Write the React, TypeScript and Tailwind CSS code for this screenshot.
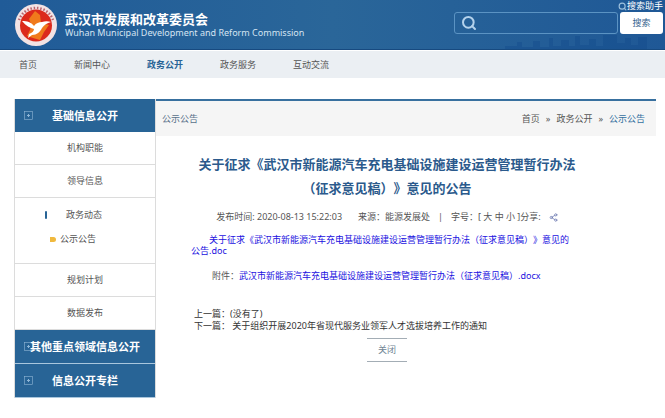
import React from 'react';
import { Search, Share2 } from 'lucide-react';

const navItems = ['首页', '新闻中心', '政务公开', '政务服务', '互动交流'];

const PlusBox: React.FC = () => (
    <svg viewBox="0 0 9 9" className="w-[9px] h-[9px] flex-shrink-0" fill="none" stroke="#8fb6d6">
        <rect x="0.5" y="0.5" width="8" height="8" strokeWidth="0.6" />
        <path d="M4.5 3v3M3 4.5h3" />
    </svg>
);

const Emblem: React.FC = () => (
    <svg viewBox="0 0 44 44" className="w-11 h-11 flex-shrink-0" aria-hidden="true">
        <circle cx="22" cy="22" r="21" fill="#f3e3e4" />
        <path d="M5 17a18 18 0 0 1 34 0" fill="none" stroke="#b9656f" strokeWidth="2.5" strokeDasharray="1.5 1.8" />
        <circle cx="22" cy="22.5" r="16" fill="#dc2a1c" />
        <path d="M21 8l5 4 1 8 8 2-5 7-4 8-7-2-6-2 3-6 1-6-2-5z" fill="#f07a1c" />
        <path d="M8 18c5 0 9 1 12 5 2-3 5-4 8-4 3-1 6-1 9 0-4 1-7 3-9 6-2 4-5 7-10 7l-4 3 1-4c3-1 5-3 5-5-4-1-8-3-12-8z" fill="#fff" />
    </svg>
);

const SideHeading: React.FC<{ title: string; tight?: boolean }> = ({ title, tight }) => (
    <a
        href="#"
        className={`flex items-center h-[33px] bg-[#286496] text-white text-[11px] font-bold whitespace-nowrap pl-[9px] ${tight ? '' : 'gap-[19px]'}`}
    >
        <PlusBox />
        <span className={tight ? '-ml-[3px]' : ''}>{title}</span>
    </a>
);

const SideItem: React.FC<{ title: string }> = ({ title }) => (
    <a href="#" className="flex items-center justify-center h-[33px] border-b border-[#dcdcdc]">
        {title}
    </a>
);

export default function App() {
    return (
        <div className="min-h-screen bg-white text-[9px] leading-3 text-[#555] font-['Noto_Sans','Noto_Sans_CJK_SC',sans-serif] [text-spacing-trim:space-all]">
            {/* Banner */}
            <header className="relative flex items-center justify-between h-[50px] pl-[14px] pr-[2px] bg-linear-to-r from-[#205b98] via-[#2a6699] to-[#1f5896] border-b border-[#174a80]">
                <svg viewBox="0 0 160 16" className="absolute bottom-0 right-0 w-40 h-4" fill="#124a8c" opacity="0.4">
                    <path d="M0 16v-3h12V9h5v5h11V8h7v6h9V5h4v8h8V7h8v6h6V3h5v9h9V6h7v7h7V2h14v8h8V5h6v7h7V4h9v12z" />
                </svg>
                <div className="relative flex items-center gap-[7px]">
                    <Emblem />
                    <div className="text-white whitespace-nowrap">
                        <h1 className="text-[13px] leading-4 font-bold">武汉市发展和改革委员会</h1>
                        <p className="text-[#d5e4f2]">Wuhan Municipal Development and Reform Commission</p>
                    </div>
                </div>
                <div className="relative flex flex-col items-end h-full">
                    <a href="#" className="flex items-center h-3 text-white">
                        <Search className="w-[9px] h-[9px] text-[#9dc0dd]" strokeWidth={3} />
                        搜索助手
                    </a>
                    <form className="flex gap-[2px]" onSubmit={(e) => e.preventDefault()}>
                        <label className="flex items-center gap-2 w-[164px] h-[22px] pl-[6px] border border-[#5b93c3] rounded-[3px]">
                            <Search className="w-4 h-4 flex-shrink-0 text-[#b4d2ec]" strokeWidth={3} />
                            <input aria-label="搜索" className="w-full min-w-0 bg-transparent outline-none text-white" />
                        </label>
                        <button className="w-[43px] h-[22px] bg-white rounded-[3px] text-[#34618d]">搜索</button>
                    </form>
                </div>
            </header>

            <nav className="flex items-center gap-[37px] h-7 pl-[19px] bg-[#ebeff3] border-t border-white">
                {navItems.map((item) => (
                    <a key={item} href="#" className={item === '政务公开' ? 'font-bold text-[#286496]' : ''}>
                        {item}
                    </a>
                ))}
            </nav>

            <div className="flex items-start pl-[14px] pr-[9px] mt-[21px]">
                {/* Sidebar */}
                <aside className="w-[142px] flex-shrink-0 border-x border-[#dcdcdc]">
                    <SideHeading title="基础信息公开" />
                    <SideItem title="机构职能" />
                    <SideItem title="领导信息" />
                    <div className="h-[66px] border-b border-[#dcdcdc]">
                        <a href="#" className="flex items-center h-[33px] pl-[30px] gap-[19px]">
                            <span className="w-[2px] h-2 rounded-full bg-[#286496]" />
                            政务动态
                        </a>
                        <a href="#" className="flex items-center h-4 pl-[35px] gap-1">
                            <span className="w-[6px] h-[5px] rounded-r-full bg-[#f0b93e]" />
                            公示公告
                        </a>
                    </div>
                    <SideItem title="规划计划" />
                    <SideItem title="数据发布" />
                    <div className="flex flex-col gap-px bg-[#a9c6dd] pb-px">
                        <SideHeading title="其他重点领域信息公开" tight />
                        <SideHeading title="信息公开专栏" />
                    </div>
                </aside>

                {/* Article */}
                <main className="flex-1 min-w-0">
                    <div className="flex items-center justify-between h-[37px] pl-[6px] pr-[11px] bg-[#f5f5f5] border-t-2 border-[#38709f]">
                        <span className="text-[#58718a]">公示公告</span>
                        <div className="flex gap-[6px]">
                            <a href="#">首页</a>
                            <span>»</span>
                            <a href="#">政务公开</a>
                            <span>»</span>
                            <a href="#" className="text-[#34709f]">公示公告</a>
                        </div>
                    </div>

                    <article className="pt-4 pl-[35px] pr-[73px]">
                        <h2 className="text-center text-[13px] leading-6 font-bold text-[#2b5a8c]">
                            关于征求《武汉市新能源汽车充电基础设施建设运营管理暂行办法
                            <br />
                            （征求意见稿）》意见的公告
                        </h2>
                        <div className="flex items-center justify-center h-[18px] mt-2 whitespace-nowrap">
                            <span className="mr-4">发布时间: 2020-08-13 15:22:03</span>
                            <span className="mr-2">来源：能源发展处</span>
                            <span className="mr-2">|</span>
                            <span>字号：[ 大 中 小 ]分享:</span>
                            <Share2 className="ml-2 w-[9px] h-[9px] text-[#6b78b0]" />
                        </div>
                        <p className="mt-2 indent-[18px] leading-[11px] whitespace-nowrap text-[#1a10e0]">
                            <a href="#">
                                关于征求《武汉市新能源汽车充电基础设施建设运营管理暂行办法（征求意见稿）》意见的
                                <br />
                                公告.doc
                            </a>
                        </p>
                        <p className="mt-[14px] pl-[21px] whitespace-nowrap">
                            附件：<a href="#" className="text-[#1a10e0]">武汉市新能源汽车充电基础设施建设运营管理暂行办法（征求意见稿）.docx</a>
                        </p>
                        <div className="mt-[26px] pl-[3px] text-[#333]">
                            <p>上一篇：(没有了)</p>
                            <p>下一篇： <a href="#">关于组织开展2020年省现代服务业领军人才选拔培养工作的通知</a></p>
                        </div>
                        <button className="block mx-auto mt-[6px] w-10 h-[24px] border-y border-[#a3adb5] text-[#6f8494]">关闭</button>
                    </article>
                </main>
            </div>
        </div>
    );
}
